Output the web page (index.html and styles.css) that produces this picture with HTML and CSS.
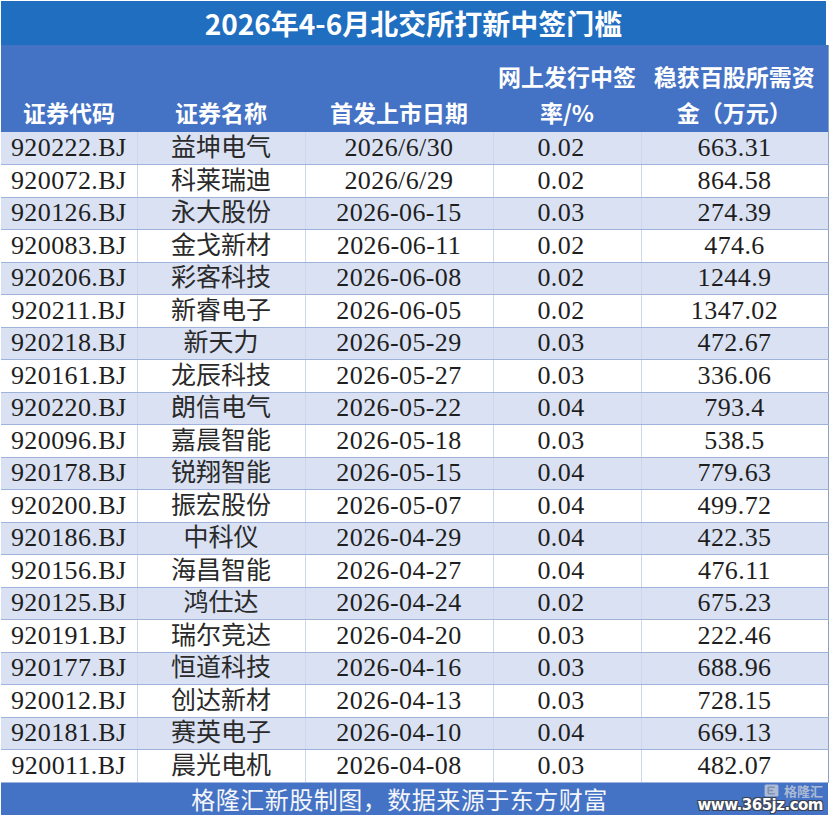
FILE: index.html
```html
<!DOCTYPE html>
<html lang="zh-CN">
<head>
<meta charset="utf-8">
<title>2026年4-6月北交所打新中签门槛</title>
<link rel="stylesheet" href="styles.css">
</head>
<body>
<div class="sheet">
  <div class="title">2026年4-6月北交所打新中签门槛</div>
  <table class="grid">
    <colgroup>
      <col class="c1"><col class="c2"><col class="c3"><col class="c4"><col class="c5">
    </colgroup>
    <thead>
      <tr>
        <th>证券代码</th>
        <th>证券名称</th>
        <th>首发上市日期</th>
        <th>网上发行中签<br>率/%</th>
        <th>稳获百股所需资<br>金（万元）</th>
      </tr>
    </thead>
    <tbody>
      <tr><td>920222.BJ</td><td class="name">益坤电气</td><td>2026/6/30</td><td class="rate">0.02</td><td>663.31</td></tr>
      <tr><td>920072.BJ</td><td class="name">科莱瑞迪</td><td>2026/6/29</td><td class="rate">0.02</td><td>864.58</td></tr>
      <tr><td>920126.BJ</td><td class="name">永大股份</td><td>2026-06-15</td><td class="rate">0.03</td><td>274.39</td></tr>
      <tr><td>920083.BJ</td><td class="name">金戈新材</td><td>2026-06-11</td><td class="rate">0.02</td><td>474.6</td></tr>
      <tr><td>920206.BJ</td><td class="name">彩客科技</td><td>2026-06-08</td><td class="rate">0.02</td><td>1244.9</td></tr>
      <tr><td>920211.BJ</td><td class="name">新睿电子</td><td>2026-06-05</td><td class="rate">0.02</td><td>1347.02</td></tr>
      <tr><td>920218.BJ</td><td class="name">新天力</td><td>2026-05-29</td><td class="rate">0.03</td><td>472.67</td></tr>
      <tr><td>920161.BJ</td><td class="name">龙辰科技</td><td>2026-05-27</td><td class="rate">0.03</td><td>336.06</td></tr>
      <tr><td>920220.BJ</td><td class="name">朗信电气</td><td>2026-05-22</td><td class="rate">0.04</td><td>793.4</td></tr>
      <tr><td>920096.BJ</td><td class="name">嘉晨智能</td><td>2026-05-18</td><td class="rate">0.03</td><td>538.5</td></tr>
      <tr><td>920178.BJ</td><td class="name">锐翔智能</td><td>2026-05-15</td><td class="rate">0.04</td><td>779.63</td></tr>
      <tr><td>920200.BJ</td><td class="name">振宏股份</td><td>2026-05-07</td><td class="rate">0.04</td><td>499.72</td></tr>
      <tr><td>920186.BJ</td><td class="name">中科仪</td><td>2026-04-29</td><td class="rate">0.04</td><td>422.35</td></tr>
      <tr><td>920156.BJ</td><td class="name">海昌智能</td><td>2026-04-27</td><td class="rate">0.04</td><td>476.11</td></tr>
      <tr><td>920125.BJ</td><td class="name">鸿仕达</td><td>2026-04-24</td><td class="rate">0.02</td><td>675.23</td></tr>
      <tr><td>920191.BJ</td><td class="name">瑞尔竞达</td><td>2026-04-20</td><td class="rate">0.03</td><td>222.46</td></tr>
      <tr><td>920177.BJ</td><td class="name">恒道科技</td><td>2026-04-16</td><td class="rate">0.03</td><td>688.96</td></tr>
      <tr><td>920012.BJ</td><td class="name">创达新材</td><td>2026-04-13</td><td class="rate">0.03</td><td>728.15</td></tr>
      <tr><td>920181.BJ</td><td class="name">赛英电子</td><td>2026-04-10</td><td class="rate">0.04</td><td>669.13</td></tr>
      <tr><td>920011.BJ</td><td class="name">晨光电机</td><td>2026-04-08</td><td class="rate">0.03</td><td>482.07</td></tr>
    </tbody>
  </table>
  <div class="footer">
    <span class="source">格隆汇新股制图，数据来源于东方财富</span>
    <div class="watermark">
      <div class="wm-top">
        <svg class="wm-logo" viewBox="0 0 18 16" width="15" height="13" aria-hidden="true">
          <rect x="0.5" y="0.5" width="17" height="15" rx="2" fill="#c9cfdc"/>
          <path d="M5 4h8M5 8h6M5 12h8M5 4v8" stroke="#8e98ad" stroke-width="2" fill="none"/>
        </svg>
        <span class="wm-brand">格隆汇</span>
      </div>
      <span class="wm-url">www.365jz.com</span>
    </div>
  </div>
</div>
</body>
</html>
```

FILE: styles.css
```css
html, body {
  margin: 0;
  padding: 0;
  background: #ffffff;
}

.sheet {
  position: relative;
  width: 827px;
  margin: 1px 0 0 1px;
  font-family: "Noto Sans CJK SC", "Noto Sans", sans-serif;
}

.title {
  height: 44px;
  width: 825px;
  background: #1f6ebf;
  color: #ffffff;
  font-weight: 700;
  font-size: 28px;
  line-height: 44px;
  text-align: center;
}

.grid {
  width: 827px;
  border-collapse: collapse;
  table-layout: fixed;
  border-right: 1px solid #8c9fc6;
}

.c1 { width: 136px; }
.c2 { width: 168px; }
.c3 { width: 188px; }
.c4 { width: 148px; }
.c5 { width: 187px; }

.grid th {
  height: 85px;
  padding: 0 0 2px 0;
  background: #4472c4;
  color: #ffffff;
  font-weight: 700;
  font-size: 23px;
  line-height: 36px;
  text-align: center;
  vertical-align: bottom;
  white-space: nowrap;
}

.grid tbody tr {
  height: 32.5px;
}

.grid tbody tr:nth-child(odd) {
  background: #d9e1f2;
}

.grid tbody tr:nth-child(even) {
  background: #ffffff;
}

.grid td {
  padding: 0;
  font-family: "Liberation Serif", "Noto Sans CJK SC", serif;
  font-size: 26px;
  line-height: 30px;
  letter-spacing: 0.4px;
  color: #1e1e1e;
  text-align: center;
  vertical-align: middle;
  white-space: nowrap;
  border-bottom: 1px solid #9fb2da;
  border-left: 1px solid #cdd6ea;
}

.grid td:first-child {
  border-left: none;
}

.grid td.name {
  font-size: 25px;
  letter-spacing: 0;
  color: #2a2a2a;
}

.grid td.rate {
  padding-right: 12px;
}

.footer {
  position: relative;
  height: 32px;
  width: 827px;
  background: #4472c4;
  color: #ffffff;
  display: flex;
  align-items: center;
  justify-content: center;
  box-sizing: border-box;
  padding-right: 30px;
}

.source {
  font-size: 24px;
  line-height: 30px;
  letter-spacing: 0.5px;
  color: #f4f6fb;
}

.watermark {
  position: absolute;
  right: 5px;
  bottom: 2px;
  display: flex;
  flex-direction: column;
  align-items: flex-end;
  gap: 1px;
}

.wm-top {
  display: flex;
  align-items: center;
  gap: 5px;
  opacity: 0.8;
}

.wm-logo {
  display: block;
}

.wm-brand {
  font-size: 13px;
  line-height: 13px;
  color: #c6ccd9;
  font-weight: 700;
}

.wm-url {
  font-family: "DejaVu Sans", sans-serif;
  font-size: 15px;
  line-height: 15px;
  font-weight: 700;
  letter-spacing: -0.5px;
  color: #ffffff;
  text-shadow: -1px -1px 0 #3b4252, 1px -1px 0 #3b4252, -1px 1px 0 #3b4252, 1px 1px 0 #3b4252;
}
```
